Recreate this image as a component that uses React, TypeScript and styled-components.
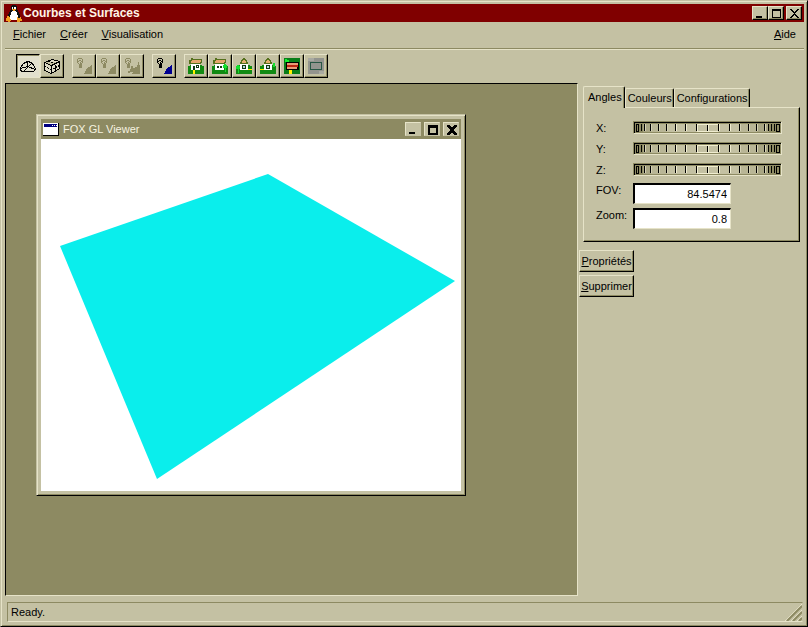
import React from 'react';
import styled, { createGlobalStyle, css } from 'styled-components';

const face = '#c4c1a3';
const light = '#e6e3c8';
const shade = '#8d8a62';

const GlobalStyle = createGlobalStyle`
  * { box-sizing: border-box; }
  body { margin: 0; background: ${face}; }
  body, button, input {
    font-family: "Liberation Sans", Arial, sans-serif;
    font-size: 11px;
    line-height: 14px;
    color: #000;
  }
  svg { display: block; flex: none; shape-rendering: crispEdges; }
`;

const raised = css`
  border: 1px solid;
  border-color: ${light} #000 #000 ${light};
  box-shadow: inset -1px -1px 0 ${shade};
`;

const Frame = styled.div`
  min-height: 100vh;
  display: flex;
  flex-direction: column;
  padding: 2px 2px 3px 3px;
  background: ${face};
  border: 1px solid;
  border-color: ${face} #000 #000 ${face};
  box-shadow: inset 1px 1px 0 ${light}, inset -1px -1px 0 ${shade};
`;

const TitleBar = styled.header<{ $inner?: boolean }>`
  display: flex;
  align-items: center;
  flex: none;
  height: ${p => (p.$inner ? 20 : 18)}px;
  margin: ${p => (p.$inner ? '0' : '1px 1px 0 0')};
  padding: 0 2px;
  gap: ${p => (p.$inner ? 4 : 1)}px;
  color: ${p => (p.$inner ? '#f6f3e0' : '#fff4e6')};
  background: ${p => (p.$inner ? shade : '#800000')};
`;

const Title = styled.h1<{ $inner?: boolean }>`
  flex: 1;
  margin: 0;
  font-size: ${p => (p.$inner ? 11 : 12)}px;
  line-height: 16px;
  font-weight: ${p => (p.$inner ? 400 : 700)};
`;

const WindowButtons = styled.div<{ $spread?: boolean }>`
  display: flex;
  gap: ${p => (p.$spread ? 3 : 0)}px;
  button:last-child { margin-left: ${p => (p.$spread ? 0 : 2)}px; }
`;

const WindowButton = styled.button<{ $soft?: boolean }>`
  ${raised}
  ${p => p.$soft && css`
    border-color: ${light} ${face} ${face} ${light};
    box-shadow: none;
  `}
  width: 16px;
  height: 14px;
  padding: 0;
  display: grid;
  place-items: center;
  background: ${face};
`;

const MenuBar = styled.nav`
  display: flex;
  height: 27px;
  padding: 0 8px 2px 8px;
  gap: 14px;
  align-items: center;
  margin: 0 1px;
  border-bottom: 1px solid ${shade};
  box-shadow: 0 1px 0 ${light};
`;

const MenuItem = styled.button<{ $end?: boolean }>`
  border: 0;
  padding: 0;
  background: none;
  margin-left: ${p => (p.$end ? 'auto' : 0)};
`;

const Toolbar = styled.div`
  display: flex;
  gap: 8px;
  padding: 5px 12px;
  height: 34px;
`;

const ToolGroup = styled.div`
  display: flex;
`;

const ToolButton = styled.button<{ $pressed?: boolean }>`
  width: 24px;
  height: 24px;
  padding: 0;
  display: grid;
  place-items: center;
  background: ${p => (p.$pressed ? '#e2e0cd' : face)};
  ${raised}
  ${p => p.$pressed && css`
    border-color: #000 ${light} ${light} #000;
    box-shadow: inset 1px 1px 0 ${shade};
  `}
`;

const Body = styled.main`
  flex: 1;
  display: flex;
  padding: 0 3px 0 1px;
`;

const Workspace = styled.section`
  flex: 1;
  position: relative;
  background: ${shade};
  border: 1px solid;
  border-color: #000 ${light} ${light} #000;
`;

const ChildWindow = styled.section`
  position: absolute;
  left: 30px;
  top: 30px;
  padding: 4px;
  background: ${face};
  border: 1px solid;
  border-color: ${face} #000 #000 ${face};
  box-shadow: inset 1px 1px 0 ${light}, inset -1px -1px 0 ${shade};
`;

const Viewport = styled.div`
  background: #fff;
  svg { shape-rendering: auto; }
`;

const SidePanel = styled.aside`
  flex: none;
  width: 224px;
  padding-top: 2px;
  display: flex;
  flex-direction: column;
  align-items: flex-start;
  gap: 3px;
`;

const TabBook = styled.div`
  width: 100%;
  padding: 0 2px 0 5px;
  margin-bottom: 5px;
`;

const TabList = styled.div`
  display: flex;
  align-items: flex-end;
  height: 22px;
`;

const Tab = styled.button<{ $active?: boolean }>`
  position: relative;
  height: ${p => (p.$active ? 22 : 19)}px;
  margin-bottom: ${p => (p.$active ? -1 : 0)}px;
  padding: ${p => (p.$active ? '0 2px 2px 4px' : '0 1px 0 2px')};
  z-index: ${p => (p.$active ? 1 : 0)};
  white-space: nowrap;
  background: ${face};
  border: 1px solid;
  border-width: 1px 1px 0 1px;
  border-color: ${light} #000 ${light} ${light};
  border-radius: 2px 2px 0 0;
  box-shadow: inset -1px 0 0 ${shade};
`;

const TabPage = styled.div`
  ${raised}
  height: 135px;
  padding: 13px 12px;
  display: grid;
  grid-template-columns: 37px 1fr;
  grid-template-rows: 21px 21px 20px 25px 25px;
  align-items: start;
`;

const DialBox = styled.div`
  display: grid;
  width: 149px;
  height: 13px;
  border: 1px solid;
  border-color: ${shade} ${light} ${light} ${shade};
  > * { grid-area: 1 / 1; }
`;

const DialInput = styled.input`
  width: 100%;
  height: 100%;
  margin: 0;
  opacity: 0;
`;

const NumberField = styled.input`
  width: 98px;
  height: 21px;
  padding: 0 3px;
  text-align: right;
  background: #fff;
  border: 1px solid;
  border-width: 2px 1px 1px 2px;
  border-color: #000 ${light} ${light} #000;
  border-radius: 0;
  outline: 0;
`;

const PushButton = styled.button`
  ${raised}
  width: 55px;
  height: 22px;
  margin-left: 1px;
  padding: 0;
  white-space: nowrap;
  background: ${face};
`;

const StatusBar = styled.footer`
  display: flex;
  align-items: center;
  justify-content: space-between;
  height: 20px;
  margin: 6px 2px 1px 3px;
  padding-left: 3px;
  border: 1px solid;
  border-color: ${shade} ${face} ${light} ${shade};
`;

const Grip = styled.svg`
  align-self: flex-end;
`;

const Penguin = () => (
  <svg width="16" height="17" viewBox="0 0 16 17" aria-hidden="true">
    <path fill="#111" d="M6 0h4v1h1v4h1v2h1v2h1v5h-2v1H4v-1H2V9h1V7h1V5h1V1h1z" />
    <path fill="#fff" d="M6 6h4v1h1v3h1v4h-1v1H5v-1H4v-4h1V7h1zM6 2h1v2H6zM8 2h2v2H8z" />
    <path fill="#f4a020" d="M6 4h4v1H9v1H7V5H6zM1 11h2v1h1v2h1v2H4v1H2v-1H0v-3h1zM11 12h1v1h2v-1h1v2h1v2h-2v1h-3z" />
  </svg>
);

const glyphs = {
  min: 'M2 8h6v2H2z',
  max: 'M2 1h9v9H2zM3 3v6h7V3z',
  close: 'M2 1h2v1h1v1h1v1h1V3h1V2h1V1h2v1h-1v1H9v1H8v1H7v1h1v1h1v1h1v1h1v1H9V9H8V8H7V7H6v1H5v1H4v1H2V9h1V8h1V7h1V6h1V5H5V4H4V3H3V2H2z',
};

const Controls = ({ spread }: { spread?: boolean }) => (
  <WindowButtons $spread={spread}>
    {(['min', 'max', 'close'] as const).map(k => (
      <WindowButton key={k} aria-label={k} $soft={spread}>
        <svg width="13" height="11" viewBox="0 0 13 11">
          <path fillRule="evenodd" d={glyphs[k]} stroke={spread && k !== 'min' ? '#000' : 'none'} strokeWidth="1" />
        </svg>
      </WindowButton>
    ))}
  </WindowButtons>
);

const Wedge = () => (
  <svg width="18" height="18" viewBox="0 0 18 18" fill="none" stroke="#000">
    <path d="M1.5 10.5 4.5 6.5 8.5 4.5 12.5 5.5 15.5 9.5 16.5 12.5 14.5 14.5 3.5 14.5 1.5 13.5zM1.5 11.5 8.5 9.5 16.5 12.5M8.5 9.5V4.5M4.5 14.5 12.5 6.5" />
  </svg>
);

const Cube = () => (
  <svg width="18" height="18" viewBox="0 0 18 18" fill="#dddac6" stroke="#000">
    <path d="M1.5 5.5 9.5 2.5 16.5 4.5 16.5 11.5 8.5 16.5 1.5 13.5zM1.5 5.5 8.5 8.5 16.5 4.5M8.5 8.5V16.5" />
    <path fill="none" d="M5.5 4.5 12.5 6.5V13.5M1.5 9.5 8.5 12.5 16.5 8.5" strokeDasharray="2 1" />
  </svg>
);

const Bulb = ({ color, wedge, extra }: { color: string; wedge: string; extra?: boolean }) => (
  <svg width="18" height="18" viewBox="0 0 18 18">
    <path fill={color} d="M3 1h4v1H3zM2 2h1v4H2zM7 2h1v4H7zM3 6h1v1H3zM6 6h1v1H6zM4 7h1v4H4zM6 7h1v4H6zM4 10h3v1H4zM4 3h2v1H4zM3 4h1v1H3zM6 4h1v1H6zM5 5h1v5H5z" />
    <path fill={wedge} d="M17 8v9h-8v-1h1v-2h1v-2h1v-1h1v-1h2V9h1V8z" />
    {extra && <path fill={wedge} d="M8 9h2v2h2v-1h2V8h1V5h1v4h-1v4h-2v3h-3v-1H7v-3h1zM5 14h2v2H5z" />}
  </svg>
);

type HouseKind = 'left' | 'right' | 'gableLeft' | 'gableRight';

const House = ({ kind }: { kind: HouseKind }) => {
  const gable = kind.startsWith('gable');
  return (
    <svg width="16" height="16" viewBox="0 0 16 16">
      <path fill="#118a12" d="M0 8h2V7h12v1h2v8H0z" />
      {gable ? (
        <>
          <path fill="#55701c" d="M7 0h2v1h1v1h1v2h1v2H4V4h1V2h1V1h1z" />
          <path fill="#e6b070" d="M7 2h2v1h1v2H6V3h1z" />
          <path fill="#fff" d="M4 6h8v6H4z" />
          <path fill="#143a14" d="M6 7h4v4H6z" />
          <path fill="#b8d7dc" d="M7 8h2v2H7z" />
          <path fill="#fff200" d={kind === 'gableLeft' ? 'M12 11h4v1h-4z' : 'M0 11h4v1H0z'} />
        </>
      ) : (
        <>
          <path fill="#55701c" d="M3 0h2v1h9v4h-1v1H1V2h2z" />
          <path fill="#e6a56c" d="M4 2h9v2h-1v1H3V3h1z" />
          <path fill="#fff" d="M3 6h9v6H3z" />
          <path fill="#143a14" d={kind === 'left' ? 'M5 8h2v4H5zM8 7h3v3H8z' : 'M5 8h2v2H5zM8 8h2v2H8z'} />
          <path fill="#fff" d={kind === 'left' ? 'M9 8h1v1H9z' : ''} />
        </>
      )}
      {kind === 'left' && <path fill="#fff200" d="M5 12h2v4H5z" />}
      {kind === 'right' && <path fill="#12e02c" d="M12 6h2v1h1v3h-1v4h-1v-4h-2V7h1z" />}
      {kind === 'gableRight' && <path fill="#12e02c" d="M13 5h2v4h-2z" />}
      {kind === 'gableLeft' && <path fill="#12e02c" d="M1 7h2v1h1v3H3v4H2v-4H0V8h1z" />}
    </svg>
  );
};

const TopHouse = () => (
  <svg width="16" height="16" viewBox="0 0 16 16">
    <path fill="#087d18" d="M0 0h16v16H0z" />
    <path fill="#12f02c" d="M1 1h2v1h2v2H1z" />
    <path d="M2 4h13v8H2z" />
    <path fill="#e79a75" d="M3 5h11v2H3zM3 9h10v2H3z" />
    <path fill="#bd2410" d="M3 7h11v2H3z" />
    <path fill="#fff200" d="M5 12h3v4H5z" />
  </svg>
);

const GreyFrame = () => (
  <svg width="16" height="16" viewBox="0 0 16 16">
    <path fill="#93948e" d="M0 0h16v16H0z" />
    <path fill="#a8a9a2" d="M0 0h6v3H0zM11 13h5v3h-5z" />
    <path fill="none" stroke="#285744" d="M2.5 4.5h11v7h-11z" />
  </svg>
);

const AppIcon = () => (
  <svg width="16" height="13" viewBox="0 0 16 13">
    <path d="M0 0h16v13H0z" />
    <path fill="#fff" d="M0 0h15v12H0z" />
    <path fill="#000080" d="M1 1h13v3H1z" />
    <path fill="#fff" d="M9 2h1v1H9zM11 2h1v1h-1zM13 2h1v1h-1z" />
  </svg>
);

const ticks = [7, 10, 16, 24, 32, 41, 51, 62, 73, 84, 95, 105, 114, 122, 130, 134, 137, 140];

const DialFace = () => (
  <svg width="147" height="11" viewBox="0 0 147 11" aria-hidden="true">
    <path d="M0 0h147v11H0z" fill="#000" />
    <path d="M1 1h146v10H1z" fill={shade} />
    <path d="M9 2h126v8H9z" fill="#a9a684" />
    <path d="M17 2h106v8H17z" fill="#b9b696" />
    <path d="M33 2h73v8H33z" fill={face} />
    {ticks.map(t => (
      <React.Fragment key={t}>
        <path d={`M${t} 2h1v7h-1z`} fill="#000" />
        {t > 8 && t < 132 && <path d={`M${t + 1} 2h1v7h-1z`} fill={t > 40 && t < 100 ? '#f0edd0' : '#d5d2b5'} />}
      </React.Fragment>
    ))}
    <path d="M63 2h21v1H63zM63 9h21v1H63z" fill="#f0edd0" />
    <path d="M2.5 2.5h2v7h-2zM142.5 2.5h3v7h-3z" fill="none" stroke="#000" />
  </svg>
);

const tools = [
  [
    { name: 'Fil de fer', icon: <Wedge />, pressed: true },
    { name: 'Cube', icon: <Cube /> },
  ],
  [
    { name: 'Lumière 1', icon: <Bulb color={shade} wedge={shade} /> },
    { name: 'Lumière 2', icon: <Bulb color={shade} wedge={shade} /> },
    { name: 'Lumière 3', icon: <Bulb color={shade} wedge={shade} extra /> },
  ],
  [{ name: 'Éclairage', icon: <Bulb color="#000" wedge="#000090" /> }],
  [
    { name: 'Vue avant', icon: <House kind="left" /> },
    { name: 'Vue arrière', icon: <House kind="right" /> },
    { name: 'Vue gauche', icon: <House kind="gableLeft" /> },
    { name: 'Vue droite', icon: <House kind="gableRight" /> },
    { name: 'Vue dessus', icon: <TopHouse /> },
    { name: 'Vue dessous', icon: <GreyFrame /> },
  ],
] as { name: string; icon: React.ReactNode; pressed?: boolean }[][];

const Hot = ({ text }: { text: string }) => (
  <><u>{text[0]}</u>{text.slice(1)}</>
);

export default function App() {
  return (
    <>
      <GlobalStyle />
      <Frame>
        <TitleBar>
          <Penguin />
          <Title>Courbes et Surfaces</Title>
          <Controls />
        </TitleBar>
        <MenuBar>
          <MenuItem><Hot text="Fichier" /></MenuItem>
          <MenuItem><Hot text="Créer" /></MenuItem>
          <MenuItem><Hot text="Visualisation" /></MenuItem>
          <MenuItem $end><Hot text="Aide" /></MenuItem>
        </MenuBar>
        <Toolbar>
          {tools.map((group, i) => (
            <ToolGroup key={i}>
              {group.map(t => (
                <ToolButton key={t.name} aria-label={t.name} $pressed={t.pressed}>{t.icon}</ToolButton>
              ))}
            </ToolGroup>
          ))}
        </Toolbar>
        <Body>
          <Workspace>
            <ChildWindow>
              <TitleBar $inner>
                <AppIcon />
                <Title as="h2" $inner>FOX GL Viewer</Title>
                <Controls spread />
              </TitleBar>
              <Viewport>
                <svg width="420" height="352" viewBox="0 0 420 352" role="img" aria-label="Surface">
                  <polygon points="19,107 227,35 414,142 116,340" fill="#0aeeec" />
                </svg>
              </Viewport>
            </ChildWindow>
          </Workspace>
          <SidePanel>
            <TabBook>
              <TabList role="tablist">
                <Tab role="tab" aria-selected $active>Angles</Tab>
                <Tab role="tab">Couleurs</Tab>
                <Tab role="tab">Configurations</Tab>
              </TabList>
              <TabPage role="tabpanel">
                {['X', 'Y', 'Z'].map(axis => (
                  <React.Fragment key={axis}>
                    <label htmlFor={axis}>{axis}:</label>
                    <DialBox>
                      <DialFace />
                      <DialInput id={axis} type="range" min={-180} max={180} defaultValue={0} />
                    </DialBox>
                  </React.Fragment>
                ))}
                <label htmlFor="fov">FOV:</label>
                <NumberField id="fov" defaultValue="84.5474" />
                <label htmlFor="zoom">Zoom:</label>
                <NumberField id="zoom" defaultValue="0.8" />
              </TabPage>
            </TabBook>
            <PushButton><Hot text="Propriétés" /></PushButton>
            <PushButton><Hot text="Supprimer" /></PushButton>
          </SidePanel>
        </Body>
        <StatusBar>
          <span>Ready.</span>
          <Grip width="17" height="17" viewBox="0 0 17 17" aria-hidden="true">
            <g shapeRendering="auto" fill="none" strokeWidth="1">
              <path stroke={light} d="M0 17 17 0M6 17 17 6M12 17 17 12" />
              <path stroke={shade} strokeWidth="2" d="M2 17 17 2M8 17 17 8M14 17 17 14" />
            </g>
          </Grip>
        </StatusBar>
      </Frame>
    </>
  );
}
